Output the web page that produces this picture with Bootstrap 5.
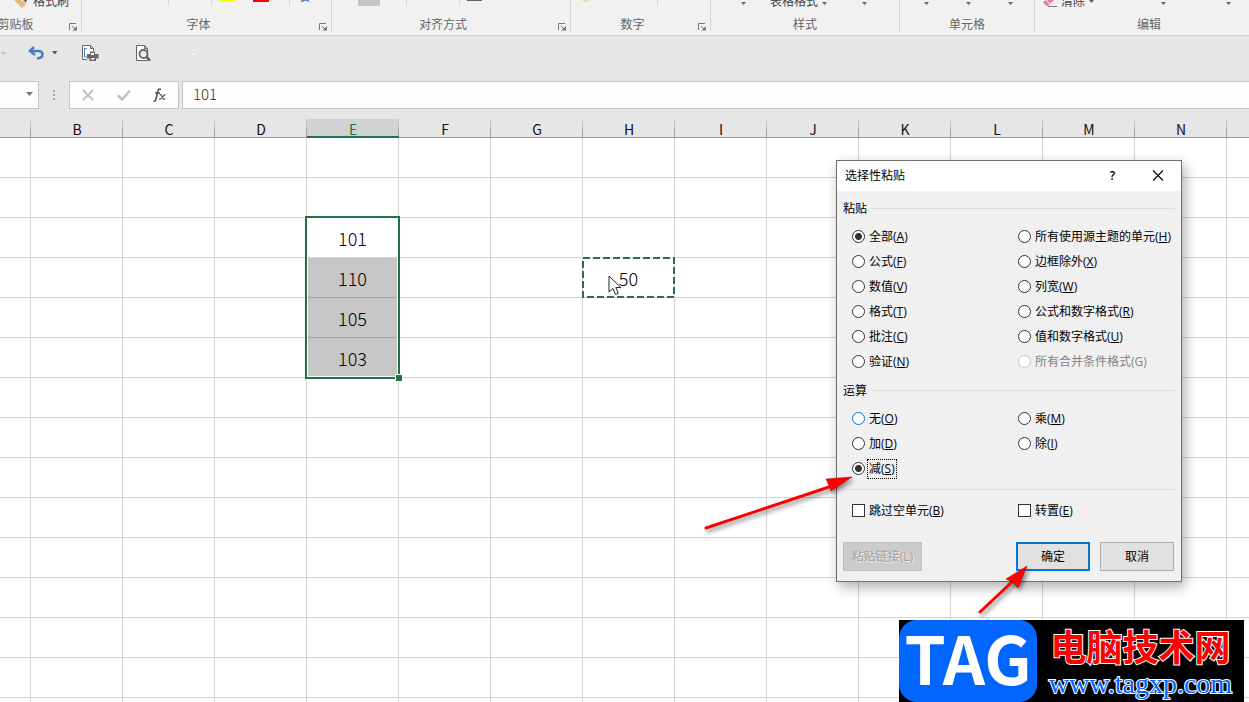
<!DOCTYPE html>
<html lang="zh-CN">
<head>
<meta charset="utf-8">
<meta name="viewport" content="width=device-width, initial-scale=1">
<title>选择性粘贴</title>
<link href="https://cdn.jsdelivr.net/npm/bootstrap@5.3.0/dist/css/bootstrap.min.css" rel="stylesheet">
<style>
  :root { --ui: "Open Sans", "Noto Sans CJK SC", sans-serif; --cell: "Noto Sans CJK SC", sans-serif; --green: #217346; }
  body { font-family: var(--ui); font-size: 12px; line-height: 18px; color: #000; background: #fff; }
  svg { display: block; }
  .sheet-app { height: 100vh; }

  /* ribbon */
  .ribbon { height: 36px; background: #f1f1f1; border-bottom: 1px solid #d0d0d0; color: #444; }
  .rgroup { height: 31px; border-right: 1px solid #d2d2d2; }
  .rgroup.g-clip { width: 116px; margin-left: -34px; }
  .rgroup.g-font { width: 250px; }
  .rgroup.g-align { width: 239px; }
  .rgroup.g-num { width: 140px; }
  .rgroup.g-style { width: 189px; }
  .rgroup.g-cells { width: 135px; }
  .rgroup.g-edit { width: 228px; border: 0; }
  .rtools { height: 11px; }
  .rtools button, .plain-btn { border: 0; background: none; padding: 0; color: inherit; }
  .rlabel { margin-top: 4px; line-height: 19px; color: #666; }
  .launcher { width: 16px; padding: 5px 0 0 4px !important; }

  /* quick access + formula bar */
  .bars { background: #e6e6e6; padding-bottom: 10px; }
  .quick { height: 45px; padding-bottom: 10px; }
  .quick .wide { margin-left: 37px; }
  .fbar { height: 28px; }
  .fbox { background: #fdfdfd; border: 1px solid #c6c6c6; }
  .namebox { width: 39px; border-left: 0; }
  .fbuttons { width: 110px; }
  .fbar input { margin-left: 3px; border: 1px solid #c6c6c6; border-right: 0; background: #fdfdfd; font: 300 15px/24px var(--cell); color: #333; padding: 0 10px 2px; outline: 0; }
  .grip { width: 30px; }

  /* grid */
  .grid-wrap { overflow: hidden; }
  .cells { table-layout: fixed; border-collapse: separate; border-spacing: 0; width: 1503px; font-family: var(--cell); }
  .cells col { width: 92px; }
  .cells col:first-child { width: 31px; }
  .cells th { height: 19px; padding: 2px 0 0; font-weight: 400; font-size: 14px; line-height: 16px; text-align: center; color: #111;
    border-bottom: 1px solid #9b9b9b; background: linear-gradient(#cfcfcf, #999) right / 1px 100% no-repeat #e6e6e6; }
  .cells th.on { background-color: #d2d2d2; color: var(--green); border-bottom-color: var(--green); box-shadow: inset 0 -1px var(--green); }
  .cells td { height: 40px; padding: 0; border: 0 solid #d4d4d4; border-width: 0 1px 1px 0; text-align: center; position: relative; font-size: 18px; line-height: 24px; font-weight: 300; }
  .cells td.sel { background: #c6c6c6; border-bottom-color: #a6a6a6; }
  .range { position: absolute; left: -2px; top: -2px; width: 95px; height: 163px; border: 2px solid var(--green); box-shadow: inset 0 0 0 1px #fff; z-index: 1; }
  .range::after { content: ""; position: absolute; right: -4px; bottom: -4px; width: 7px; height: 7px; background: var(--green); border: 1px solid #fff; border-width: 1px 0 0 1px; }
  .ants { position: absolute; left: -1px; top: -1px; z-index: 1; }
  .pointer { position: absolute; left: 25px; top: 17px; z-index: 2; }

  /* dialog */
  .paste-dialog { position: absolute; left: 836px; top: 160px; width: 346px; background: #f0f0f0; border: 1px solid #6e6e6e; box-shadow: 3px 5px 12px rgba(0,0,0,.32); z-index: 5; }
  .dlg-title { height: 30px; background: #fff; padding-left: 8px; padding-right: 1px; }
  .dlg-title button { width: 45px; height: 30px; }
  .dlg-body { padding: 5px 6px 10px; }
  .sect { height: 24px; gap: 5px; line-height: 24px; }
  .sect span { padding-top: 2px; }
  .sect::after { content: ""; flex: 1; height: 1px; background: #dcdcdc; }
  .opts { display: grid; grid-template-columns: 166px 1fr; grid-auto-rows: 25px; align-items: center; padding-left: 9px; margin: 4px 0; white-space: nowrap; }
  .opt { display: flex; align-items: center; gap: 2px; }
  .opt input { appearance: none; width: 13px; height: 13px; margin: 0; border: 1px solid #333; background: #fff; flex: none; }
  .opt input[type=radio] { border-radius: 50%; }
  .opt input[type=radio]:checked { background: radial-gradient(circle, #333 0 3px, #fff 4px); }
  .opt input.hot { border-color: #0078d7; }
  .opt input:disabled { border-color: #c4c4c4; }
  .opt input:disabled + label { color: #838383; }
  .opt label { padding: 0 1px; border: 1px solid transparent; line-height: 18px; }
  .opt label.focused { border: 1px dotted #000; }
  .opt u { text-underline-offset: 1px; }
  .rule { height: 1px; background: #dcdcdc; margin: 8px 0; }
  .dlg-actions { margin-top: 19px; gap: 10px; padding-right: 1px; }
  .dlg-actions .btn { width: 74px; height: 29px; padding: 0; border: 1px solid #adadad; border-radius: 0; background: #e1e1e1; color: #000; font-size: 12px; line-height: 18px; }
  .dlg-actions .btn.main { border: 2px solid #0078d7; }
  .dlg-actions .btn:disabled { width: 79px; opacity: 1; background: #ccc; border-color: #bfbfbf; color: #a0a0a0; text-shadow: 1px 1px #eee; }
  .arrow-a, .arrow-b { position: absolute; z-index: 6; pointer-events: none; filter: drop-shadow(2px 3px 2px rgba(0,0,0,.45)); }
  .arrow-a { left: -136px; top: 310px; }
  .arrow-b { left: 138px; top: 400px; }

  /* site mark */
  .site { position: absolute; right: 5px; bottom: 0; width: 345px; height: 82px; background: #000; z-index: 7; }
  .site-tag { width: 138px; height: 82px; border-radius: 18px; background: #0066ff; color: #fff; font: 700 66px/72px "Noto Sans CJK SC", sans-serif; }
  .site-text { flex: 1; text-align: center; white-space: nowrap; }
  .site-cn { font: 700 36px/46px "Noto Sans CJK SC", sans-serif; color: #f00; -webkit-text-stroke: 2px #fff; paint-order: stroke fill; padding-top: 2px; }
  .site-url { display: block; font: 400 28px/32px "Liberation Serif", serif; color: #0066ff; -webkit-text-stroke: 2px #fff; paint-order: stroke fill; text-decoration: none; }
</style>
</head>
<body>
<svg width="0" height="0" class="position-absolute" aria-hidden="true">
  <symbol id="launch" viewBox="0 0 9 9"><path d="M.5 7V.5H7M3 3l3 3" fill="none" stroke="#777"/><path d="M3.500 7.500H8V3z" fill="#777"/></symbol>
</svg>
<div class="sheet-app position-relative overflow-hidden">
  <header class="ribbon d-flex overflow-hidden">
    <section class="rgroup g-clip flex-shrink-0">
      <div class="rtools d-flex align-items-end">
        <svg width="67" height="11"><path d="M48 0h7l5 4-4 4z" fill="#e8b878"/><path d="M57 0h4l-1 3z" fill="#666"/></svg><button type="button" class="text-nowrap">格式刷</button>
      </div>
      <div class="rlabel d-flex"><span class="flex-fill text-center">剪贴板</span><button type="button" class="plain-btn launcher" aria-label="剪贴板设置"><svg width="9" height="9"><use href="#launch"/></svg></button></div>
    </section>
    <section class="rgroup g-font flex-shrink-0">
      <div class="rtools"><svg width="249" height="11"><path d="M86.500 0v5M129.500 0v5M207.500 0v5" stroke="#d2d2d2"/><path d="M137 0h16v2h-16z" fill="#ff0"/><path d="M171 0h16v2h-16z" fill="red"/><path d="M219 1.500l4-1.500h2l2 1.500" fill="none" stroke="#4a7ebb" stroke-width="1.500"/></svg></div>
      <div class="rlabel d-flex"><span class="flex-fill text-center">字体</span><button type="button" class="plain-btn launcher" aria-label="字体设置"><svg width="9" height="9"><use href="#launch"/></svg></button></div>
    </section>
    <section class="rgroup g-align flex-shrink-0">
      <div class="rtools"><svg width="238" height="11"><path d="M26 0h22v6H26z" fill="#c5c5c5"/><path d="M74.500 0v5M127.500 0v5" stroke="#d2d2d2"/><path d="M135 0h15v1h-15z" fill="#666"/></svg></div>
      <div class="rlabel d-flex"><span class="flex-fill text-center">对齐方式</span><button type="button" class="plain-btn launcher" aria-label="对齐设置"><svg width="9" height="9"><use href="#launch"/></svg></button></div>
    </section>
    <section class="rgroup g-num flex-shrink-0">
      <div class="rtools"><svg width="139" height="11"><path d="M12 0q3 3 6 0" fill="none" stroke="#edc070"/><path d="M86.500 0v5" stroke="#d2d2d2"/></svg></div>
      <div class="rlabel d-flex"><span class="flex-fill text-center">数字</span><button type="button" class="plain-btn launcher" aria-label="数字设置"><svg width="9" height="9"><use href="#launch"/></svg></button></div>
    </section>
    <section class="rgroup g-style flex-shrink-0">
      <div class="rtools d-flex align-items-end">
        <svg width="59" height="11"><path d="M30 2h5l-2.500 3z" fill="#666"/></svg><button type="button" class="text-nowrap">表格格式</button><svg width="80" height="11"><path d="M4 2h5l-2.500 3zM44 2h5l-2.500 3z" fill="#666"/></svg>
      </div>
      <div class="rlabel text-center">样式</div>
    </section>
    <section class="rgroup g-cells flex-shrink-0">
      <div class="rtools"><svg width="134" height="11"><path d="M24 2h5l-2.500 3zM66 2h5l-2.500 3zM108 2h5l-2.500 3z" fill="#666"/></svg></div>
      <div class="rlabel text-center">单元格</div>
    </section>
    <section class="rgroup g-edit flex-shrink-0">
      <div class="rtools d-flex align-items-end">
        <svg width="26" height="11"><path d="M8 2l3-2h8l-6 6h-2z" fill="#e67f92"/><path d="M11 0l4 4" stroke="#fff"/><path d="M13 6.500h9" stroke="#777"/></svg><button type="button" class="text-nowrap">清除</button><svg width="178" height="11"><path d="M4 0h5l-2.500 3zM76 2h5l-2.500 3zM141 2h5l-2.500 3z" fill="#666"/></svg>
      </div>
      <div class="rlabel text-center">编辑</div>
    </section>
  </header>

  <div class="bars">
    <nav class="quick d-flex align-items-center" aria-label="快速访问">
      <svg width="28" height="16"><path d="M1 6h5L3.500 9z" fill="#bbb"/></svg>
      <button type="button" class="plain-btn" aria-label="撤消"><svg width="16" height="16"><path d="M6 1L2 5l5 4M2.500 5H10q4.500 0 4.500 3.500T9 12.500" fill="none" stroke="#4a7ebb" stroke-width="2.500"/></svg></button>
      <button type="button" class="plain-btn ps-2" aria-label="撤消列表"><svg width="6" height="16"><path d="M0 5h5.500L2.700 8.500z" fill="#555"/></svg></button>
      <button type="button" class="plain-btn ms-4" aria-label="快速打印"><svg width="17" height="17"><path d="M5 14.500H.5V.5h8l3 3V6M8.500.5v3h3" fill="#fff" stroke="#666"/><path d="M5 3.500H2.500v8.500H5" fill="none" stroke="#4a7ebb"/><path d="M8 6.500h5V9h3.500v4.500H14V16H7.500v-2.500H5V9h3z" fill="#666"/><path d="M9 8h3v2H9zM9 13h3.500v1.500H9z" fill="#fff"/></svg></button>
      <button type="button" class="plain-btn wide" aria-label="打印预览"><svg width="17" height="17"><path d="M.5.500h8l3 3v12H.5zM8.500.500v3h3" fill="#fff" stroke="#666"/><circle cx="7.500" cy="9" r="4" fill="#eee" stroke="#666" stroke-width="1.800"/><path d="M10.500 12l3.500 3.500" stroke="#666" stroke-width="2.500"/></svg></button>
      <button type="button" class="plain-btn wide" aria-label="自定义"><svg width="7" height="16"><path d="M1 4.500h5" stroke="#f4f4f4"/><path d="M1 7h5L3.500 10z" fill="#f4f4f4"/></svg></button>
    </nav>
    <div class="fbar d-flex">
      <button type="button" class="fbox namebox d-flex align-items-center justify-content-end p-0 pe-1" aria-label="名称框"><svg width="9" height="7"><path d="M1 0h7L4.500 4z" fill="#777"/></svg></button>
      <svg class="grip" height="28"><path d="M14 9h2v2h-2zM14 13h2v2h-2zM14 17h2v2h-2z" fill="#aaa"/></svg>
      <div class="fbox fbuttons d-flex align-items-center justify-content-between px-2">
        <button type="button" class="plain-btn ps-1" aria-label="取消"><svg width="12" height="12"><path d="M1 1l10 10M11 1L1 11" stroke="#c0c0c0" stroke-width="1.800"/></svg></button>
        <button type="button" class="plain-btn" aria-label="输入"><svg width="14" height="12"><path d="M1 6.500L5 10.500 13 1.500" fill="none" stroke="#c0c0c0" stroke-width="2.500"/></svg></button>
        <button type="button" class="plain-btn pe-1" aria-label="插入函数"><svg width="13" height="16"><path d="M8 2.500q-2.500-1.500-3.200 2L3 12q-.6 2.800-2.500 2M2 6h5" fill="none" stroke="#555" stroke-width="1.600"/><path d="M6.500 8q1.500-1 2 .5l1.300 3q.6 1.300 2.500 0M12.500 8q-1-.6-2 1L8 11.500q-.8 1-2 .5" fill="none" stroke="#555" stroke-width="1.200"/></svg></button>
      </div>
      <input type="text" class="flex-fill" value="101" aria-label="编辑栏">
    </div>
  </div>

  <div class="grid-wrap">
    <table class="cells">
      <colgroup id="cols"></colgroup>
      <thead><tr id="heads"></tr></thead>
      <tbody id="rows"></tbody>
    </table>
  </div>

  <form class="paste-dialog" role="dialog" aria-label="选择性粘贴">
    <div class="dlg-title d-flex align-items-center">
      <span class="flex-fill">选择性粘贴</span>
      <button type="button" class="plain-btn fw-semibold" aria-label="帮助">?</button>
      <button type="button" class="plain-btn d-flex align-items-center justify-content-center" aria-label="关闭"><svg width="12" height="12"><path d="M1 .5l10 10M11 .5l-10 10" stroke="#000" stroke-width="1.100"/></svg></button>
    </div>
    <div class="dlg-body">
      <div class="sect d-flex align-items-center"><span>粘贴</span></div>
      <div class="opts">
        <div class="opt"><input type="radio" name="paste" id="pA" checked><label for="pA">全部(<u>A</u>)</label></div>
        <div class="opt"><input type="radio" name="paste" id="pH"><label for="pH">所有使用源主题的单元(<u>H</u>)</label></div>
        <div class="opt"><input type="radio" name="paste" id="pF"><label for="pF">公式(<u>F</u>)</label></div>
        <div class="opt"><input type="radio" name="paste" id="pX"><label for="pX">边框除外(<u>X</u>)</label></div>
        <div class="opt"><input type="radio" name="paste" id="pV"><label for="pV">数值(<u>V</u>)</label></div>
        <div class="opt"><input type="radio" name="paste" id="pW"><label for="pW">列宽(<u>W</u>)</label></div>
        <div class="opt"><input type="radio" name="paste" id="pT"><label for="pT">格式(<u>T</u>)</label></div>
        <div class="opt"><input type="radio" name="paste" id="pR"><label for="pR">公式和数字格式(<u>R</u>)</label></div>
        <div class="opt"><input type="radio" name="paste" id="pC"><label for="pC">批注(<u>C</u>)</label></div>
        <div class="opt"><input type="radio" name="paste" id="pU"><label for="pU">值和数字格式(<u>U</u>)</label></div>
        <div class="opt"><input type="radio" name="paste" id="pN"><label for="pN">验证(<u>N</u>)</label></div>
        <div class="opt"><input type="radio" name="paste" id="pG" disabled><label for="pG">所有合并条件格式(G)</label></div>
      </div>
      <div class="sect d-flex align-items-center"><span>运算</span></div>
      <div class="opts">
        <div class="opt"><input type="radio" name="op" id="oO" class="hot"><label for="oO">无(<u>O</u>)</label></div>
        <div class="opt"><input type="radio" name="op" id="oM"><label for="oM">乘(<u>M</u>)</label></div>
        <div class="opt"><input type="radio" name="op" id="oD"><label for="oD">加(<u>D</u>)</label></div>
        <div class="opt"><input type="radio" name="op" id="oI"><label for="oI">除(<u>I</u>)</label></div>
        <div class="opt"><input type="radio" name="op" id="oS" checked><label for="oS" class="focused">减(<u>S</u>)</label></div>
      </div>
      <div class="rule"></div>
      <div class="opts">
        <div class="opt"><input type="checkbox" id="cB"><label for="cB">跳过空单元(<u>B</u>)</label></div>
        <div class="opt"><input type="checkbox" id="cE"><label for="cE">转置(<u>E</u>)</label></div>
      </div>
      <div class="dlg-actions d-flex">
        <button type="button" class="btn me-auto" disabled>粘贴链接(L)</button>
        <button type="button" class="btn main">确定</button>
        <button type="button" class="btn">取消</button>
      </div>
    </div>
    <svg class="arrow-a" width="156" height="64" aria-hidden="true"><path d="M5 57L128 16" stroke="#f00" stroke-width="3" stroke-linecap="round"/><path d="M151 6L130 20l-1-4-4-8z" fill="#f00" stroke="#900" stroke-width=".5"/></svg>
    <svg class="arrow-b" width="56" height="56" aria-hidden="true"><path d="M5 51L38 20" stroke="#f00" stroke-width="3" stroke-linecap="round"/><path d="M52 5L43 27l-5-6-7-3z" fill="#f00" stroke="#900" stroke-width=".5"/></svg>
  </form>

  <aside class="site d-flex">
    <div class="site-tag text-center">TAG</div>
    <div class="site-text"><div class="site-cn">电脑技术网</div><a class="site-url" href="#">www.tagxp.com</a></div>
  </aside>
</div>

<script src="https://cdn.jsdelivr.net/npm/bootstrap@5.3.0/dist/js/bootstrap.bundle.min.js"></script>
<script>
  const letters = ['', ...'BCDEFGHIJKLMNOPQ'];
  const values = { E3: '101', E4: '110', E5: '105', E6: '103', H4: '50' };
  const extras = {
    E3: '<div class="range"></div>',
    H4: '<svg class="ants" width="93" height="41"><rect x="1" y="1" width="91" height="39" fill="none" stroke="#217346" stroke-width="2" stroke-dasharray="7 3"/></svg>' +
        '<svg class="pointer" width="14" height="22"><path d="M1 1v16l4-3.500 2.500 6 2.800-1.200L7.800 12.500h5z" fill="#fff" stroke="#223" /></svg>'
  };
  document.getElementById('cols').innerHTML = letters.map(() => '<col>').join('');
  document.getElementById('heads').innerHTML = letters.map(c => `<th scope="col"${c === 'E' ? ' class="on"' : ''}>${c}</th>`).join('');
  let html = '';
  for (let r = 1; r <= 40; r++) {
    html += '<tr>' + letters.map(c => {
      const key = c + r;
      const sel = ['E4', 'E5', 'E6'].includes(key) ? ' class="sel"' : '';
      return `<td${sel}>${values[key] || ''}${extras[key] || ''}</td>`;
    }).join('') + '</tr>';
  }
  document.getElementById('rows').innerHTML = html;
</script>
</body>
</html>
